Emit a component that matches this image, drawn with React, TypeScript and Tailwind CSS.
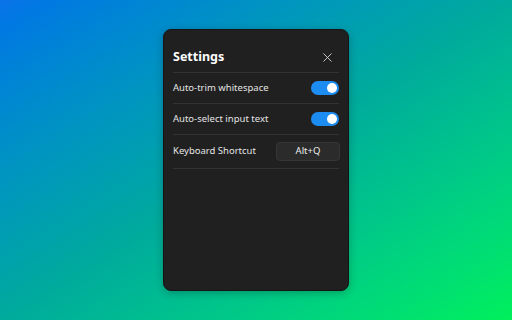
import { X } from 'lucide-react'

function Toggle() {
  return (
    <div className="flex h-[14px] w-[28px] items-center justify-end rounded-full bg-[#1d8cf0] px-[2px]">
      <div className="h-[10px] w-[10px] rounded-full bg-white" />
    </div>
  )
}

function Row({ label, children, tall }: { label: string; children: React.ReactNode; tall?: boolean }) {
  return (
    <div className={`flex items-center justify-between border-b border-[#333333] ${tall ? 'h-[34px]' : 'h-[31px]'}`}>
      <span className="text-[9.5px] text-[#e4e4e4]">{label}</span>
      {children}
    </div>
  )
}

export default function App() {
  return (
    <div
      className="flex h-[320px] w-[512px] items-center justify-center bg-gradient-to-br from-[#0a72e8] via-[#00aa9c] to-[#00f05a]"
      style={{ fontFamily: '"Noto Sans", "Open Sans", sans-serif' }}
    >
      <div className="flex h-[262px] w-[186px] flex-col rounded-[8px] border border-[#151515] bg-[#202020] px-[9px] shadow-[0_2px_8px_rgba(0,0,0,0.25)]">
        <div className="flex h-[43px] items-center justify-between border-b border-[#333333] pt-[12px]">
          <span className="text-[12.5px] font-bold text-white">Settings</span>
          <X size={15} strokeWidth={1.4} className="mr-[4px] text-[#dadada]" />
        </div>
        <Row label="Auto-trim whitespace">
          <Toggle />
        </Row>
        <Row label="Auto-select input text">
          <Toggle />
        </Row>
        <Row label="Keyboard Shortcut" tall>
          <div className="mr-[-1px] flex h-[19px] w-[64px] items-center justify-center rounded-[4px] border border-[#363636] bg-[#2b2b2b] text-[9.5px] text-[#eeeeee]">
            Alt+Q
          </div>
        </Row>
      </div>
    </div>
  )
}
